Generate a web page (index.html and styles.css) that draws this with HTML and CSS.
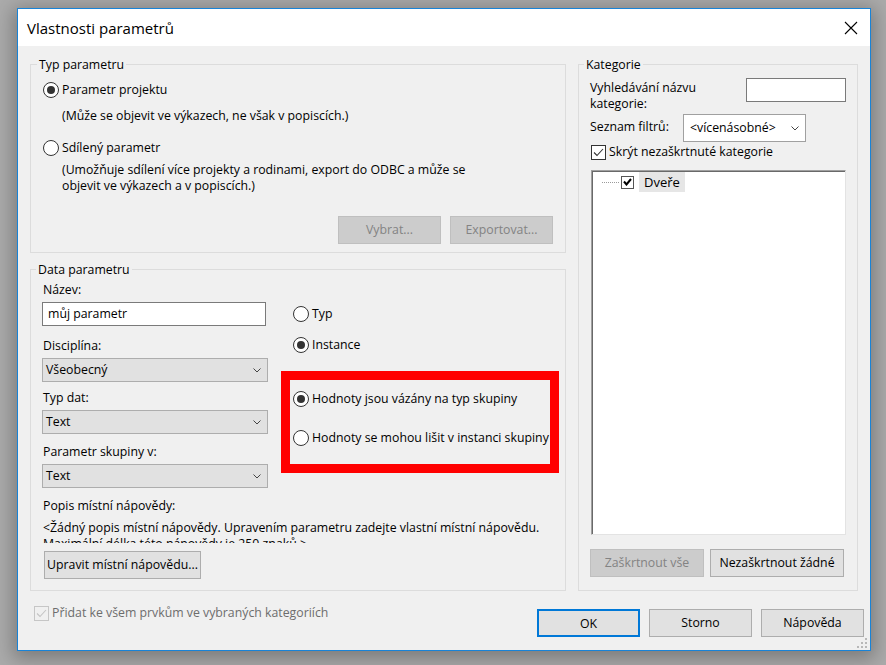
FILE: index.html
```html
<!DOCTYPE html>
<html lang="cs">
<head>
<meta charset="utf-8">
<title>Vlastnosti parametrů</title>
<link rel="stylesheet" href="styles.css">
</head>
<body>
<div class="window">
  <div class="titlebar">
    <span class="title">Vlastnosti parametrů</span>
    <svg class="close" width="14" height="14" viewBox="0 0 14 14"><path d="M1 1L13 13M13 1L1 13" stroke="#000" stroke-width="1.1" fill="none"/></svg>
  </div>
  <div class="client">
    <div class="main">
      <div class="leftcol">
        <fieldset class="grp grp-type">
          <legend>Typ parametru</legend>
          <label class="radio mt9"><span class="rb on"></span>Parametr projektu</label>
          <div class="desc mt10">(Může se objevit ve výkazech, ne však v popiscích.)</div>
          <label class="radio mt16"><span class="rb"></span>Sdílený parametr</label>
          <div class="desc mt6">(Umožňuje sdílení více projekty a rodinami, export do ODBC a může se<br>objevit ve výkazech a v popiscích.)</div>
          <div class="btnrow"><button class="btn dis">Vybrat...</button><button class="btn dis">Exportovat...</button></div>
        </fieldset>
        <fieldset class="grp grp-data">
          <legend>Data parametru</legend>
          <div class="data-top">
            <div class="formcol">
              <div class="lbl mt4">Název:</div>
              <div class="textbox mt4">můj parametr</div>
              <div class="lbl mt12">Disciplína:</div>
              <div class="combo mt4"><span>Všeobecný</span><svg class="chev" width="8" height="5" viewBox="0 0 8 5"><polyline points="0.5,0.5 4,4 7.5,0.5" fill="none" stroke="#444" stroke-width="1"/></svg></div>
              <div class="lbl mt8">Typ dat:</div>
              <div class="combo mt4"><span>Text</span><svg class="chev" width="8" height="5" viewBox="0 0 8 5"><polyline points="0.5,0.5 4,4 7.5,0.5" fill="none" stroke="#444" stroke-width="1"/></svg></div>
              <div class="lbl mt10">Parametr skupiny v:</div>
              <div class="combo mt4"><span>Text</span><svg class="chev" width="8" height="5" viewBox="0 0 8 5"><polyline points="0.5,0.5 4,4 7.5,0.5" fill="none" stroke="#444" stroke-width="1"/></svg></div>
            </div>
            <div class="radcol">
              <label class="radio mt28"><span class="rb"></span>Typ</label>
              <label class="radio mt15"><span class="rb on"></span>Instance</label>
              <label class="radio mt38"><span class="rb on"></span>Hodnoty jsou vázány na typ skupiny</label>
              <label class="radio mt23"><span class="rb"></span>Hodnoty se mohou lišit v instanci skupiny</label>
            </div>
          </div>
          <div class="lbl mt10">Popis místní nápovědy:</div>
          <div class="tipdesc mt6">&lt;Žádný popis místní nápovědy. Upravením parametru zadejte vlastní místní nápovědu.<br>Maximální délka této nápovědy je 250 znaků.&gt;</div>
          <button class="btn btn-edit mt8">Upravit místní nápovědu...</button>
        </fieldset>
      </div>
      <fieldset class="grp grp-cat">
        <legend>Kategorie</legend>
        <div class="cat-search">
          <div class="lbl2">Vyhledávání názvu<br>kategorie:</div>
          <div class="textbox sm"></div>
        </div>
        <div class="cat-filter">
          <div class="lbl3">Seznam filtrů:</div>
          <div class="combo white"><span>&lt;vícenásobné&gt;</span><svg class="chev" width="8" height="5" viewBox="0 0 8 5"><polyline points="0.5,0.5 4,4 7.5,0.5" fill="none" stroke="#444" stroke-width="1"/></svg></div>
        </div>
        <label class="check">
          <span class="cb"><svg width="11" height="9" viewBox="0 0 11 9"><polyline points="1,4.5 4,7.5 10,1" fill="none" stroke="#333" stroke-width="1.1"/></svg></span>Skrýt nezaškrtnuté kategorie
        </label>
        <div class="tree">
          <div class="node">
            <span class="dots"></span>
            <span class="cb small"><svg width="9" height="8" viewBox="0 0 9 8"><polyline points="1,3.5 3.5,6.5 8,1" fill="none" stroke="#000" stroke-width="2"/></svg></span>
            <span class="node-text">Dveře</span>
          </div>
        </div>
        <div class="cat-btns">
          <button class="btn dis w114">Zaškrtnout vše</button>
          <button class="btn w134">Nezaškrtnout žádné</button>
        </div>
      </fieldset>
    </div>
    <div class="footer">
      <label class="check disabled">
        <span class="cb"><svg width="11" height="9" viewBox="0 0 11 9"><polyline points="1,4.5 4,7.5 10,1" fill="none" stroke="#c4c4c4" stroke-width="1.1"/></svg></span>Přidat ke všem prvkům ve vybraných kategoriích
      </label>
      <div class="btns">
        <button class="btn def">OK</button>
        <button class="btn">Storno</button>
        <button class="btn">Nápověda</button>
      </div>
    </div>
  </div>
  <div class="annot"></div>
  <svg class="grip" width="11" height="11" viewBox="0 0 11 11">
    <rect x="8" y="0" width="2" height="2" fill="#b8b8b8"/>
    <rect x="4" y="4" width="2" height="2" fill="#b8b8b8"/>
    <rect x="8" y="4" width="2" height="2" fill="#b8b8b8"/>
    <rect x="0" y="8" width="2" height="2" fill="#b8b8b8"/>
    <rect x="4" y="8" width="2" height="2" fill="#b8b8b8"/>
    <rect x="8" y="8" width="2" height="2" fill="#b8b8b8"/>
  </svg>
</div>
</body>
</html>
```

FILE: styles.css
```css
* { box-sizing: border-box; }
html, body { margin: 0; padding: 0; }
body {
  width: 886px; height: 665px; overflow: hidden;
  background: #ababab;
  font-family: "Open Sans", "Noto Sans", sans-serif;
  font-size: 12.3px; line-height: 16px; color: #000;
}
.window {
  position: relative;
  margin: 8px 0 0 17px;
  width: 854px; height: 643px;
  border: 1px solid #1883d7;
  background: #f0f0f0;
  box-shadow: 0 4px 18px 4px rgba(0,0,0,0.28);
  display: flex; flex-direction: column;
}
.titlebar {
  height: 37px; flex: none; background: #fff;
  display: flex; align-items: center; justify-content: space-between;
  padding: 0 12px 0 9px;
}
.title { font-size: 15px; line-height: 20px; }
.close { display: block; }
.client { flex: 1; padding: 10px 12px 0; display: flex; flex-direction: column; }
.main { height: 535px; flex: none; display: flex; gap: 12px; }
.leftcol { width: 536px; flex: none; display: flex; flex-direction: column; gap: 8px; }

.grp { margin: 0; padding: 0 12px; border: 1px solid #dcdcdc; min-width: 0; }
.grp legend { padding: 0 2px; margin-left: -6px; line-height: 17px; height: 17px; }
.grp-type { height: 197px; }
.grp-data { height: 330px; padding-left: 11px; }
.grp-cat { width: 280px; flex: none; padding: 0 11px; }

.mt4 { margin-top: 4px; } .mt6 { margin-top: 6px; } .mt8 { margin-top: 8px; }
.mt9 { margin-top: 9px; } .mt10 { margin-top: 10px; } .mt12 { margin-top: 12px; }
.mt15 { margin-top: 15px; } .mt16 { margin-top: 16px; } .mt23 { margin-top: 23px; }
.mt28 { margin-top: 28px; } .mt38 { margin-top: 38px; }

.radio { display: flex; align-items: center; height: 16px; gap: 3px; white-space: nowrap; }
.rb {
  width: 16px; height: 16px; flex: none;
  border: 1px solid #333; border-radius: 50%; background: #fff;
  display: flex; align-items: center; justify-content: center;
}
.rb.on::after { content: ""; width: 8px; height: 8px; border-radius: 50%; background: #333; }
.desc { margin-left: 19px; }

.btnrow { display: flex; justify-content: flex-end; gap: 9px; margin-top: 22px; margin-right: 0; }
.btn {
  height: 28px; width: 103px; padding: 0;
  border: 1px solid #adadad; background: #e1e1e1;
  font: inherit; font-size: 12.3px; line-height: 26px; color: #000; text-align: center;
  display: block;
}
.btn.dis { background: #cccccc; border-color: #bfbfbf; color: #838383; }
.btn.def { border: 2px solid #0078d7; }
.w114 { width: 114px; } .w134 { width: 134px; }

.data-top { display: flex; }
.formcol { width: 226px; flex: none; }
.radcol { margin-left: 25px; }
.lbl { padding-left: 1px; height: 16px; }
.textbox {
  height: 24px; width: 224px; background: #fff; border: 1px solid #7a7a7a;
  padding: 0 5px; line-height: 22px;
}
.textbox.sm { width: 100px; }
.combo {
  height: 24px; width: 226px; background: #e1e1e1; border: 1px solid #adadad;
  padding: 0 6px 0 3px; display: flex; align-items: center; justify-content: space-between;
}
.chev { display: block; }
.combo.white { background: #fff; border-color: #a0a0a0; width: 123px; height: 28px; padding: 0 6px 0 6px; }
.tipdesc { height: 23px; overflow: hidden; padding-left: 1px; white-space: nowrap; }
.btn-edit { width: 157px; margin-left: 2px; }

.cat-search { display: flex; justify-content: space-between; align-items: flex-start; margin-top: 5px; height: 34px; }
.lbl2 { margin-top: 2px; }
.cat-filter { display: flex; align-items: flex-start; margin-top: 2px; }
.lbl3 { width: 93px; margin-top: 5px; flex: none; }
.check { display: flex; align-items: center; gap: 3px; height: 16px; margin-top: 2px; margin-left: 1px; white-space: nowrap; }
.cb {
  width: 15px; height: 15px; flex: none; border: 1px solid #333; background: #fff;
  display: flex; align-items: center; justify-content: center;
}
.cb svg { display: block; }
.tree {
  margin: 10px 0 0 1px; width: 255px; height: 365px; background: #fff;
  border: 1px solid; border-color: #a0a0a0 #e3e3e3 #e3e3e3 #a0a0a0;
  box-shadow: inset 1px 1px 0 #696969;
}
.node { display: flex; align-items: center; height: 20px; margin-top: 1px; }
.dots { width: 17px; border-top: 1px dotted #9a9a9a; margin-left: 10px; }
.cb.small { width: 13px; height: 13px; margin-left: 2px; border-color: #555; }
.node-text { margin-left: 5px; padding: 0 5px; height: 20px; line-height: 20px; font-size: 13px; background: #e6e6e6; }
.cat-btns { display: flex; gap: 6px; margin-top: 14px; }

.footer { display: flex; align-items: flex-start; padding-top: 18px; }
.check.disabled { margin: -4px 0 0 4px; color: #6d6d6d; }
.check.disabled .cb { border-color: #c6c6c6; background: #f0f0f0; }
.btns { margin-left: auto; margin-right: -6px; display: flex; gap: 9px; }

.annot {
  position: absolute; left: 263px; top: 362px; width: 278px; height: 102px;
  border: 9px solid #ff0000; pointer-events: none;
}
.grip { position: absolute; right: 2px; bottom: 1px; }
```
